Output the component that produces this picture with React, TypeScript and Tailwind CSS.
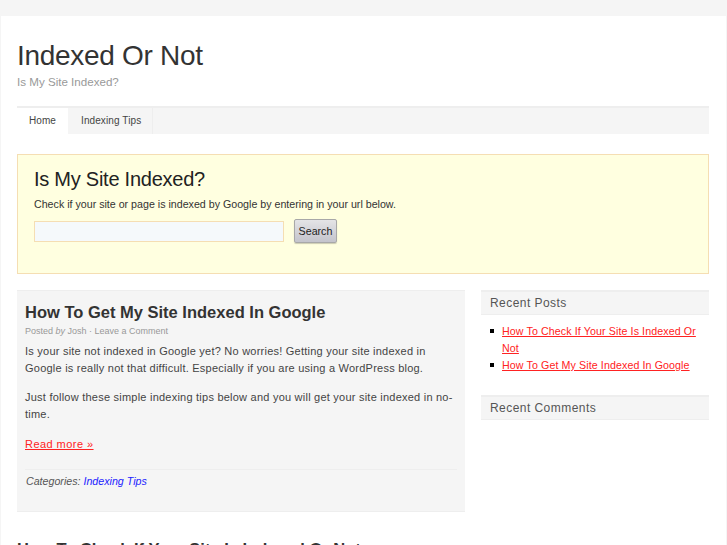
export default function App() {
  return (
    <div className="h-[545px] overflow-hidden bg-[#f5f5f5] pt-4 px-px font-['Liberation_Sans',Arial,sans-serif] text-[#444]">
      <div className="bg-white px-4 h-[600px]">
        <header className="pt-[22px] h-[90px]">
          <h1 className="text-[28px] leading-[36px] tracking-[-0.3px] text-[#333]">Indexed Or Not</h1>
          <p className="text-[11.6px] leading-[16px] text-[#999]">Is My Site Indexed?</p>
        </header>

        <nav className="flex h-[28px] bg-[#f5f5f5] border-t-2 border-[#eeeeee] text-[10px] tracking-[0.1px] text-[#444] w-[692px]">
          <a className="bg-white w-[51px] text-center leading-[25px] h-[26px]">Home</a>
          <a className="w-[85px] pl-[13px] leading-[25px] border-r border-[#eeeeee]">Indexing Tips</a>
        </nav>

        <section className="mt-5 h-[120px] w-[692px] bg-[#ffffe0] border border-[#f5deb3] pl-4 pt-[11px]">
          <h2 className="text-xl leading-[26px] tracking-[-0.25px] text-[#222]">Is My Site Indexed?</h2>
          <p className="text-[10.67px] leading-[16px] text-[#333] mt-[4px]">
            Check if your site or page is indexed by Google by entering in your url below.
          </p>
          <div className="flex items-center mt-[7px] gap-[10px]">
            <input className="w-[250px] h-[21px] bg-[#f5f9fb] border border-[#f5deb3]" />
            <button className="h-[24px] w-[43px] rounded-[2px] bg-gradient-to-b from-[#e4e4e6] to-[#c4c4cc] border border-[#a8a8a8] shadow-[0_1px_1px_rgba(0,0,0,0.2)] text-[10.67px] text-[#222]">
              Search
            </button>
          </div>
        </section>

        <div className="flex gap-4 mt-4 w-[692px]">
          <main className="w-[448px]">
            <article className="bg-[#f5f5f5] border-t border-b border-[#eeeeee] h-[222px] px-2 pt-[10px]">
              <h2 className="text-[16.5px] leading-[22px] font-bold text-[#333]">How To Get My Site Indexed In Google</h2>
              <p className="text-[9px] leading-[14px] text-[#999] mt-[1px]">
                Posted <em>by</em> Josh · Leave a Comment
              </p>
              <p className="text-[11px] leading-[17px] tracking-[0.23px] mt-[5px]">
                Is your site not indexed in Google yet? No worries! Getting your site indexed in Google is really not that difficult. Especially if you are using a WordPress blog.
              </p>
              <p className="text-[11px] leading-[17px] tracking-[0.23px] mt-[12px]">
                Just follow these simple indexing tips below and you will get your site indexed in no-time.
              </p>
              <p className="text-[11px] leading-[17px] tracking-[0.45px] mt-[13px]">
                <a className="text-[#f22] underline">Read more »</a>
              </p>
              <div className="border-t border-[#eeeeee] mt-[16px] pt-[3px] pl-px text-[10.67px] leading-[17px] italic text-[#555]">
                Categories: <a className="text-[#22f]">Indexing Tips</a>
              </div>
            </article>
            <h2 className="text-[16.5px] leading-[22px] font-bold text-[#333] mt-[26px]">How To Check If Your Site Is Indexed Or Not</h2>
          </main>

          <aside className="w-[228px]">
            <h3 className="bg-[#f5f5f5] border-t-2 border-b border-[#eeeeee] h-[25px] pl-[9px] text-xs leading-[22px] tracking-[0.45px] text-[#555]">Recent Posts</h3>
            <ul className="pl-[9px] mt-[8px] mb-[21px] text-[10.67px] leading-[17px] tracking-[0.1px]">
              <li className="flex gap-2">
                <span className="w-1 h-1 mt-[6px] shrink-0 bg-black" />
                <a className="text-[#f22] underline">How To Check If Your Site Is Indexed Or Not</a>
              </li>
              <li className="flex gap-2">
                <span className="w-1 h-1 mt-[6px] shrink-0 bg-black" />
                <a className="text-[#f22] underline">How To Get My Site Indexed In Google</a>
              </li>
            </ul>
            <h3 className="bg-[#f5f5f5] border-t-2 border-b border-[#eeeeee] h-[25px] pl-[9px] text-xs leading-[22px] tracking-[0.45px] text-[#555]">Recent Comments</h3>
          </aside>
        </div>
      </div>
    </div>
  );
}
